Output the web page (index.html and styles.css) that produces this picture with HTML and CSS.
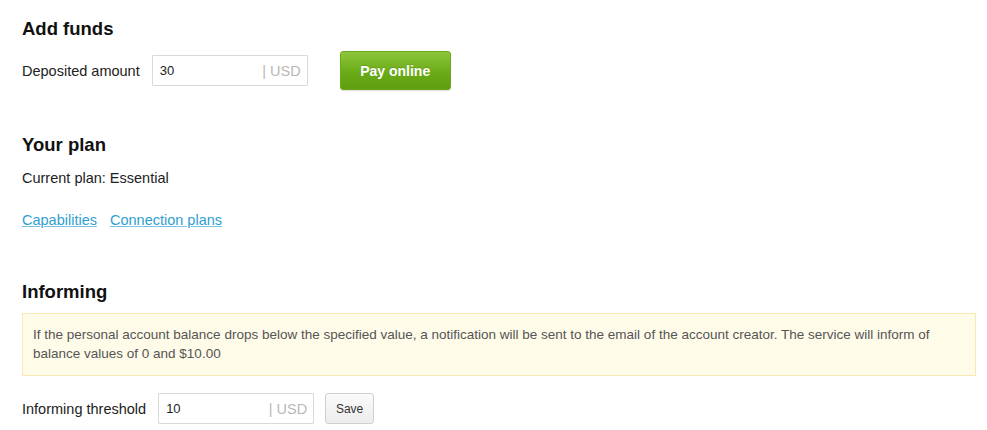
FILE: index.html
```html
<!DOCTYPE html>
<html>
<head>
<meta charset="utf-8">
<link rel="stylesheet" href="styles.css">
</head>
<body>
<div class="page">
  <section class="sec sec-funds">
    <h2 class="title">Add funds</h2>
    <div class="row">
      <span class="label">Deposited amount</span>
      <div class="field"><span class="val">30</span><span class="unit">| USD</span></div>
      <button class="btn-pay">Pay online</button>
    </div>
  </section>

  <section class="sec sec-plan">
    <h2 class="title">Your plan</h2>
    <p class="plan">Current plan: Essential</p>
    <div class="links">
      <a class="link" href="#">Capabilities</a>
      <a class="link" href="#">Connection plans</a>
    </div>
  </section>

  <section class="sec sec-inform">
    <h2 class="title">Informing</h2>
    <div class="notice">If the personal account balance drops below the specified value, a notification will be sent to the email of the account creator. The service will inform of balance values of 0 and $10.00</div>
    <div class="row row-threshold">
      <span class="label">Informing threshold</span>
      <div class="field"><span class="val">10</span><span class="unit">| USD</span></div>
      <button class="btn-save">Save</button>
    </div>
  </section>
</div>
</body>
</html>
```

FILE: styles.css
```css
* { box-sizing: border-box; }
html, body { margin: 0; padding: 0; background: #fff; }
body {
  font-family: "Liberation Sans", Arial, Helvetica, sans-serif;
  color: #222;
  font-size: 14.5px;
}
.page { padding: 18px 12px 0 22px; }
.title {
  margin: 0;
  font-size: 18.5px;
  line-height: 22px;
  font-weight: bold;
  color: #111;
}
.row {
  display: flex;
  align-items: center;
}
.sec-funds .row { margin-top: 11px; }
.label { color: #222; }
.field {
  display: flex;
  align-items: center;
  justify-content: space-between;
  width: 156px;
  height: 31px;
  border: 1px solid #d9d9d9;
  border-radius: 1px;
  padding: 0 6px 0 7px;
  margin-left: 12px;
  font-size: 13px;
}
.field .val { color: #222; }
.field .unit { color: #b8b8b8; font-size: 14.5px; }
.btn-pay {
  margin-left: 32px;
  width: 111px;
  height: 39px;
  border: 1px solid #6da51d;
  border-radius: 3px;
  background: linear-gradient(#8ec63c, #6aab17 55%, #5f9e0f);
  color: #fff;
  font-family: inherit;
  font-weight: bold;
  font-size: 14px;
  text-shadow: 0 -1px 0 rgba(0,0,0,0.15);
  box-shadow: 0 1px 1px rgba(0,0,0,0.15);
  padding: 0;
}
.sec-plan { margin-top: 44px; }
.plan { margin: 11px 0 0; line-height: 22px; }
.links { margin-top: 20px; display: flex; gap: 13px; line-height: 22px; }
.link {
  color: #2f9ed0;
  font-size: 14.5px;
  text-decoration: underline;
  text-decoration-color: #7cc3e3;
}
.sec-inform { margin-top: 50px; }
.notice {
  margin-top: 10px;
  width: 954px;
  background: #fffbe9;
  border: 1px solid #f9e7b4;
  padding: 11px 10px 12px 10px;
  color: #555;
  font-size: 13.5px;
  line-height: 19px;
}
.row-threshold { margin-top: 17px; }
.btn-save {
  margin-left: 11px;
  width: 49px;
  height: 31px;
  border: 1px solid #cfcfcf;
  border-radius: 3px;
  background: linear-gradient(#fbfbfb, #ececec);
  color: #333;
  font-family: inherit;
  font-size: 12px;
  padding: 0;
}
```
